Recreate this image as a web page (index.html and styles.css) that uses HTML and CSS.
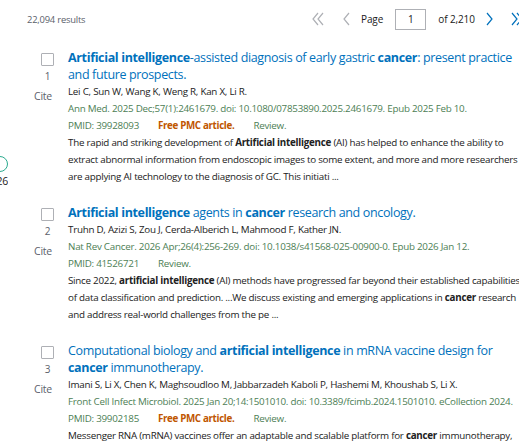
FILE: index.html
```html
<!doctype html>
<html lang="en">

<head>
  <meta charset="UTF-8">
  <meta name="viewport" content="width=device-width, initial-scale=1">
  <title>Search results</title>
  <link rel="stylesheet" href="styles.css">
</head>

<body>
  <div class="page">
    <aside class="side">
      <span class="side-toggle"></span>
      <span class="side-year">2026</span>
    </aside>

    <main class="results">
      <div class="top-bar">
        <span class="count">22,094 results</span>
        <nav class="pager">
          <svg class="chev off first" width="12" height="14" viewBox="0 0 12 14"><path d="M6 1 L1 7 L6 13 M11 1 L6 7 L11 13" /></svg>
          <svg class="chev off prev" width="7" height="14" viewBox="0 0 7 14"><path d="M6 1 L1 7 L6 13" /></svg>
          <span class="pager-label">Page</span>
          <span class="page-box">1</span>
          <span class="pager-of">of 2,210</span>
          <svg class="chev on next" width="7" height="14" viewBox="0 0 7 14"><path d="M1 1 L6 7 L1 13" /></svg>
          <svg class="chev on last" width="12" height="14" viewBox="0 0 12 14"><path d="M1 1 L6 7 L1 13 M6 1 L11 7 L6 13" /></svg>
        </nav>
      </div>

      <article class="docsum">
        <div class="gutter">
          <span class="check"></span>
          <span class="num">1</span>
          <span class="cite">Cite</span>
        </div>
        <div class="body">
          <a class="title" href="#"><b>Artificial intelligence</b>-assisted diagnosis of early gastric <b>cancer</b>: present practice<br>and future prospects.</a>
          <div class="authors">Lei C, Sun W, Wang K, Weng R, Kan X, Li R.</div>
          <div class="journal">Ann Med. 2025 Dec;57(1):2461679. doi: 10.1080/07853890.2025.2461679. Epub 2025 Feb 10.</div>
          <div class="meta"><span class="pmid">PMID: 39928093</span><span class="free">Free PMC article.</span><span class="type">Review.</span></div>
          <p class="snippet">The rapid and striking development of <b>Artificial intelligence</b> (AI) has helped to enhance the ability to<br>extract abnormal information from endoscopic images to some extent, and more and more researchers<br>are applying AI technology to the diagnosis of GC. This initiati ...</p>
        </div>
      </article>

      <article class="docsum">
        <div class="gutter">
          <span class="check"></span>
          <span class="num">2</span>
          <span class="cite">Cite</span>
        </div>
        <div class="body">
          <a class="title" href="#"><b>Artificial intelligence</b> agents in <b>cancer</b> research and oncology.</a>
          <div class="authors">Truhn D, Azizi S, Zou J, Cerda-Alberich L, Mahmood F, Kather JN.</div>
          <div class="journal">Nat Rev Cancer. 2026 Apr;26(4):256-269. doi: 10.1038/s41568-025-00900-0. Epub 2026 Jan 12.</div>
          <div class="meta"><span class="pmid">PMID: 41526721</span><span class="type">Review.</span></div>
          <p class="snippet">Since 2022, <b>artificial intelligence</b> (AI) methods have progressed far beyond their established capabilities<br>of data classification and prediction. ...We discuss existing and emerging applications in <b>cancer</b> research<br>and address real-world challenges from the pe ...</p>
        </div>
      </article>

      <article class="docsum">
        <div class="gutter">
          <span class="check"></span>
          <span class="num">3</span>
          <span class="cite">Cite</span>
        </div>
        <div class="body">
          <a class="title" href="#">Computational biology and <b>artificial intelligence</b> in mRNA vaccine design for<br><b>cancer</b> immunotherapy.</a>
          <div class="authors">Imani S, Li X, Chen K, Maghsoudloo M, Jabbarzadeh Kaboli P, Hashemi M, Khoushab S, Li X.</div>
          <div class="journal">Front Cell Infect Microbiol. 2025 Jan 20;14:1501010. doi: 10.3389/fcimb.2024.1501010. eCollection 2024.</div>
          <div class="meta"><span class="pmid">PMID: 39902185</span><span class="free">Free PMC article.</span><span class="type">Review.</span></div>
          <p class="snippet">Messenger RNA (mRNA) vaccines offer an adaptable and scalable platform for <b>cancer</b> immunotherapy,</p>
        </div>
      </article>
    </main>
  </div>
</body>

</html>
```

FILE: styles.css
```css
body {
  margin: 0;
  background: #fff;
  color: #212121;
  font: 400 9.8px/17px "Open Sans", sans-serif;
  letter-spacing: -0.25px;
  overflow: hidden;
}

.page {
  display: flex;
  width: 519px;
  height: 443px;
  overflow: hidden;
}

/* the filter column, cut off at the left edge */
.side {
  flex: 0 0 8px;
  display: flex;
  flex-direction: column;
  align-items: flex-end;
  overflow: hidden;
  padding-top: 156px;
}

.side-toggle {
  flex: none;
  width: 16px;
  height: 16px;
  border: 1.5px solid #2bab8f;
  border-radius: 50%;
  box-sizing: border-box;
}

.side-year {
  font-size: 10.5px;
  line-height: 18px;
  color: #212121;
  white-space: nowrap;
}

.results {
  flex: none;
  width: 540px;
  padding-left: 19px;
}

.top-bar {
  display: flex;
  align-items: center;
  height: 38px;
}

.count {
  color: #5b616b;
  font-size: 9.4px;
  letter-spacing: -0.2px;
  width: 285px;
}

.pager {
  display: flex;
  align-items: center;
  color: #212121;
  font-size: 10px;
  letter-spacing: -0.1px;
}

.chev path {
  fill: none;
  stroke-width: 1.2;
}

.chev.off path {
  stroke: #aeb0b5;
}

.chev.on path {
  stroke: #0071bc;
}

.first {
  margin-right: 19px;
}

.prev {
  margin-right: 11px;
}

.page-box {
  width: 31px;
  height: 21px;
  border: 1px solid #aeb0b5;
  box-sizing: border-box;
  margin: 0 12px 0 12px;
  text-align: center;
  line-height: 19px;
}

.pager-of {
  margin-right: 11px;
}

.next {
  margin-right: 18px;
}

.docsum {
  display: flex;
  padding-top: 11px;
  padding-bottom: 8px;
}

.gutter {
  flex: 0 0 41px;
  display: flex;
  flex-direction: column;
  align-items: center;
}

.check {
  width: 13px;
  height: 13px;
  border: 1px solid #aeb0b5;
  border-radius: 1px;
  box-sizing: border-box;
  margin-top: 4px;
}

.num {
  margin-top: 3px;
  color: #5b616b;
  font-size: 10px;
  line-height: 14px;
}

.cite {
  margin-top: 6px;
  margin-right: 9px;
  color: #5b616b;
  font-size: 10.5px;
  line-height: 14px;
}

.body {
  flex: 1;
  white-space: nowrap;
}

.title {
  display: block;
  color: #0071bc;
  text-decoration: none;
  font-size: 12.5px;
  letter-spacing: -0.35px;
  line-height: 17px;
}

.title b {
  font-weight: 700;
}

.journal,
.meta {
  color: #4d8055;
}

.pmid {
  margin-right: 19px;
}

.free {
  color: #c05600;
  font-weight: 700;
  letter-spacing: -0.35px;
  margin-right: 19px;
}

.snippet {
  margin: 0;
}
```
